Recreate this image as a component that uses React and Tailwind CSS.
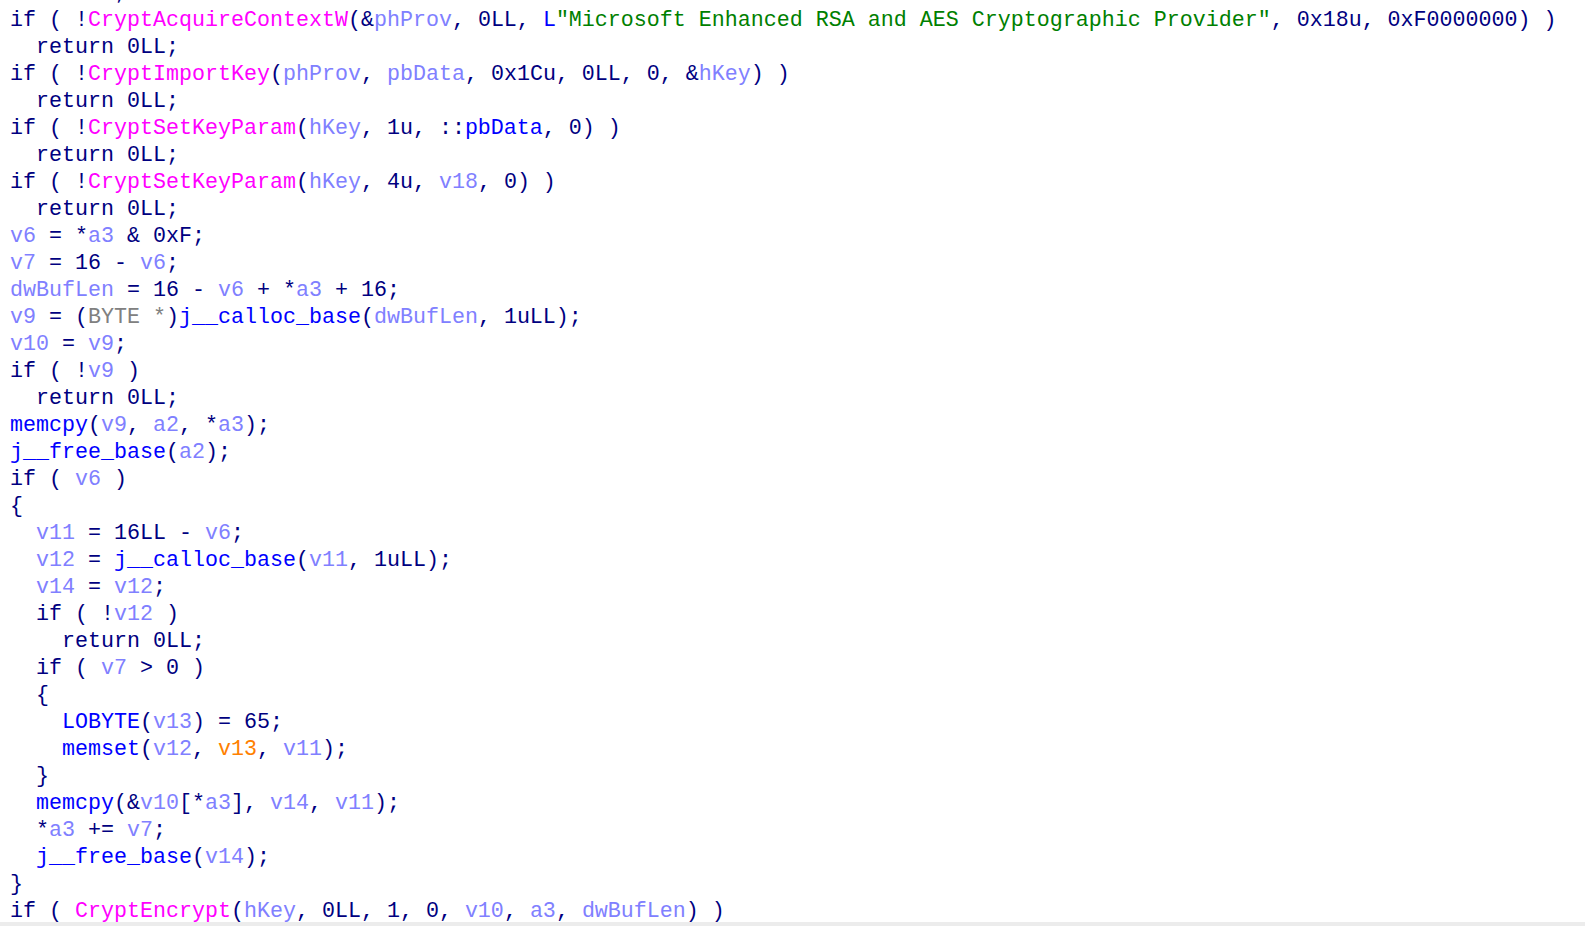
import React from "react";

const C = {
  n: "text-[#000080]",
  m: "text-[#ff00ff]",
  v: "text-[#8080ff]",
  b: "text-[#0000ff]",
  g: "text-[#008000]",
  y: "text-[#808080]",
  o: "text-[#ff8000]",
};

const L = [
  [["n", "        ;"]],
  [["n", "if ( !"], ["m", "CryptAcquireContextW"], ["n", "(&"], ["v", "phProv"], ["n", ", 0LL, "], ["b", "L"], ["g", "\"Microsoft Enhanced RSA and AES Cryptographic Provider\""], ["n", ", 0x18u, 0xF0000000) )"]],
  [["n", "  return 0LL;"]],
  [["n", "if ( !"], ["m", "CryptImportKey"], ["n", "("], ["v", "phProv"], ["n", ", "], ["v", "pbData"], ["n", ", 0x1Cu, 0LL, 0, &"], ["v", "hKey"], ["n", ") )"]],
  [["n", "  return 0LL;"]],
  [["n", "if ( !"], ["m", "CryptSetKeyParam"], ["n", "("], ["v", "hKey"], ["n", ", 1u, ::"], ["b", "pbData"], ["n", ", 0) )"]],
  [["n", "  return 0LL;"]],
  [["n", "if ( !"], ["m", "CryptSetKeyParam"], ["n", "("], ["v", "hKey"], ["n", ", 4u, "], ["v", "v18"], ["n", ", 0) )"]],
  [["n", "  return 0LL;"]],
  [["v", "v6"], ["n", " = *"], ["v", "a3"], ["n", " & 0xF;"]],
  [["v", "v7"], ["n", " = 16 - "], ["v", "v6"], ["n", ";"]],
  [["v", "dwBufLen"], ["n", " = 16 - "], ["v", "v6"], ["n", " + *"], ["v", "a3"], ["n", " + 16;"]],
  [["v", "v9"], ["n", " = ("], ["y", "BYTE *"], ["n", ")"], ["b", "j__calloc_base"], ["n", "("], ["v", "dwBufLen"], ["n", ", 1uLL);"]],
  [["v", "v10"], ["n", " = "], ["v", "v9"], ["n", ";"]],
  [["n", "if ( !"], ["v", "v9"], ["n", " )"]],
  [["n", "  return 0LL;"]],
  [["b", "memcpy"], ["n", "("], ["v", "v9"], ["n", ", "], ["v", "a2"], ["n", ", *"], ["v", "a3"], ["n", ");"]],
  [["b", "j__free_base"], ["n", "("], ["v", "a2"], ["n", ");"]],
  [["n", "if ( "], ["v", "v6"], ["n", " )"]],
  [["n", "{"]],
  [["n", "  "], ["v", "v11"], ["n", " = 16LL - "], ["v", "v6"], ["n", ";"]],
  [["n", "  "], ["v", "v12"], ["n", " = "], ["b", "j__calloc_base"], ["n", "("], ["v", "v11"], ["n", ", 1uLL);"]],
  [["n", "  "], ["v", "v14"], ["n", " = "], ["v", "v12"], ["n", ";"]],
  [["n", "  if ( !"], ["v", "v12"], ["n", " )"]],
  [["n", "    return 0LL;"]],
  [["n", "  if ( "], ["v", "v7"], ["n", " > 0 )"]],
  [["n", "  {"]],
  [["n", "    "], ["b", "LOBYTE"], ["n", "("], ["v", "v13"], ["n", ") = 65;"]],
  [["n", "    "], ["b", "memset"], ["n", "("], ["v", "v12"], ["n", ", "], ["o", "v13"], ["n", ", "], ["v", "v11"], ["n", ");"]],
  [["n", "  }"]],
  [["n", "  "], ["b", "memcpy"], ["n", "(&"], ["v", "v10"], ["n", "[*"], ["v", "a3"], ["n", "], "], ["v", "v14"], ["n", ", "], ["v", "v11"], ["n", ");"]],
  [["n", "  *"], ["v", "a3"], ["n", " += "], ["v", "v7"], ["n", ";"]],
  [["n", "  "], ["b", "j__free_base"], ["n", "("], ["v", "v14"], ["n", ");"]],
  [["n", "}"]],
  [["n", "if ( "], ["m", "CryptEncrypt"], ["n", "("], ["v", "hKey"], ["n", ", 0LL, 1, 0, "], ["v", "v10"], ["n", ", "], ["v", "a3"], ["n", ", "], ["v", "dwBufLen"], ["n", ") )"]],
];

export default function App() {
  return (
    <div className="w-[1585px] h-[926px] bg-white overflow-hidden flex flex-col">
      <div
        className="flex-1 overflow-hidden pl-[10px] -mt-[20px] text-[21.66px] leading-[27px] whitespace-pre"
        style={{ fontFamily: '"Liberation Mono", "DejaVu Sans Mono", monospace' }}
      >
        {L.map((line, i) => (
          <div key={i} className="h-[27px]">
            {line.map(([k, t], j) => (
              <span key={j} className={C[k]}>
                {t}
              </span>
            ))}
          </div>
        ))}
      </div>
      <div className="h-[4px] bg-[#ececec] shrink-0" />
    </div>
  );
}
